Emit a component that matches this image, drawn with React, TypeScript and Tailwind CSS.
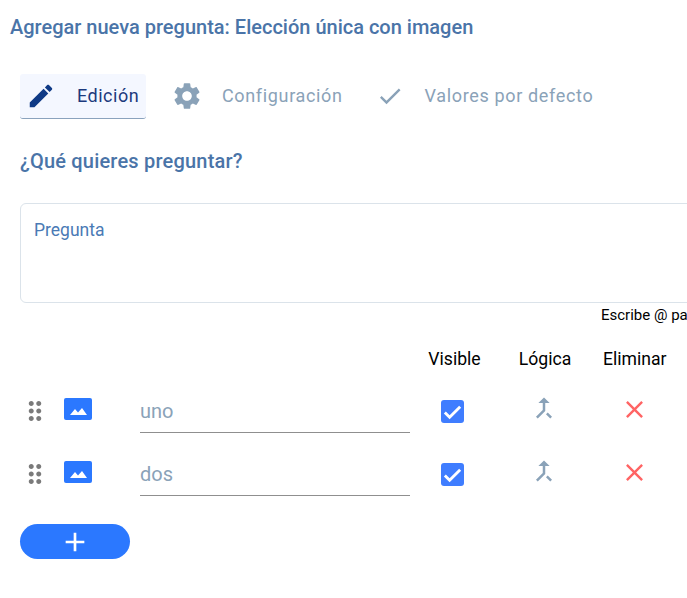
const ROW_GRID = "grid grid-cols-[30px_56px_34px_270px_84px_100px_80px]";

const Icon = ({ d, className }: { d: string; className: string }) => (
  <svg viewBox="0 0 24 24" fill="currentColor" className={className}>
    <path d={d} />
  </svg>
);

const ICONS = {
  edit: "M3 17.25V21h3.75L17.81 9.94l-3.75-3.75L3 17.25zM20.71 7.04c.39-.39.39-1.02 0-1.41l-2.34-2.34c-.39-.39-1.02-.39-1.41 0l-1.83 1.83 3.75 3.75 1.83-1.83z",
  settings:
    "M19.14 12.94c.04-.3.06-.61.06-.94 0-.32-.02-.64-.07-.94l2.03-1.58c.18-.14.23-.41.12-.61l-1.92-3.32c-.12-.22-.37-.29-.59-.22l-2.39.96c-.5-.38-1.03-.7-1.62-.94l-.36-2.54c-.04-.24-.24-.41-.48-.41h-3.84c-.24 0-.43.17-.47.41l-.36 2.54c-.59.24-1.13.57-1.62.94l-2.39-.96c-.22-.08-.47 0-.59.22L2.74 8.87c-.12.21-.08.47.12.61l2.03 1.58c-.05.3-.09.63-.09.94s.02.64.07.94l-2.03 1.58c-.18.14-.23.41-.12.61l1.92 3.32c.12.22.37.29.59.22l2.39-.96c.5.38 1.03.7 1.62.94l.36 2.54c.05.24.24.41.48.41h3.84c.24 0 .44-.17.47-.41l.36-2.54c.59-.24 1.13-.56 1.62-.94l2.39.96c.22.08.47 0 .59-.22l1.92-3.32c.12-.22.07-.47-.12-.61l-2.01-1.58zM12 15.6c-1.98 0-3.6-1.62-3.6-3.6s1.62-3.6 3.6-3.6 3.6 1.62 3.6 3.6-1.62 3.6-3.6 3.6z",
  check: "M9 16.17L4.83 12l-1.42 1.41L9 19 21 7l-1.41-1.41z",
  drag: "M11 18c0 1.1-.9 2-2 2s-2-.9-2-2 .9-2 2-2 2 .9 2 2zm-2-8c-1.1 0-2 .9-2 2s.9 2 2 2 2-.9 2-2-.9-2-2-2zm0-6c-1.1 0-2 .9-2 2s.9 2 2 2 2-.9 2-2-.9-2-2-2zm6 4c1.1 0 2-.9 2-2s-.9-2-2-2-2 .9-2 2 .9 2 2 2zm0 2c-1.1 0-2 .9-2 2s.9 2 2 2 2-.9 2-2-.9-2-2-2zm0 6c-1.1 0-2 .9-2 2s.9 2 2 2 2-.9 2-2-.9-2-2-2z",
  merge: "M17 20.41L18.41 19 15 15.59 13.59 17 17 20.41zM7.5 8H11v5.59L5.59 19 7 20.41l6-6V8h3.5L12 3.5 7.5 8z",
  close: "M19 6.41L17.59 5 12 10.59 6.41 5 5 6.41 10.59 12 5 17.59 6.41 19 12 13.41 17.59 19 19 17.59 13.41 12z",
  plus: "M19 13h-6v6h-2v-6H5v-2h6V5h2v6h6v2z",
};

const OptionRow = ({ label }: { label: string }) => (
  <div className={`${ROW_GRID} h-[40px] items-start`}>
    <div className="flex justify-center pt-[3px]">
      <Icon d={ICONS.drag} className="size-[30px] text-[#7a7a7a]" />
    </div>
    <div className="flex justify-center pt-[5px]">
      <div className="flex h-[22px] w-[28px] items-end justify-center rounded-[2px] bg-[#2b78ff] pb-[5px]">
        <svg viewBox="0 0 17 7" fill="white" className="h-[7px] w-[17px]">
          <path d="M0 7L5 1l3 3.5L12 0l5 7z" />
        </svg>
      </div>
    </div>
    <div />
    <div className="flex h-[40px] items-center border-b border-[#8f8f8f] pb-[3px] text-[20px] text-[#8aa2b8]">
      {label}
    </div>
    <div className="flex justify-center pt-[7px]">
      <div className="flex size-[23px] items-center justify-center rounded-[3px] bg-[#3f7dff]">
        <svg viewBox="0 0 24 24" fill="none" stroke="white" strokeWidth="3" className="size-[23px]">
          <path d="M4 13l5 5L20 7" />
        </svg>
      </div>
    </div>
    <div className="flex justify-center">
      <Icon d={ICONS.merge} className="size-[30px] text-[#8aa2b8]" />
    </div>
    <div className="flex justify-center pt-[2px]">
      <Icon d={ICONS.close} className="size-[29px] text-[#ff6464]" />
    </div>
  </div>
);

export default function App() {
  return (
    <div className="h-[598px] w-[687px] overflow-hidden bg-white font-['Roboto',sans-serif]">
      <h1 className="pl-[10px] pt-[15px] text-[20px] leading-[24px] font-medium whitespace-nowrap text-[#4a74a8]">
        Agregar nueva pregunta: Elección única con imagen
      </h1>

      <div className="mt-[35px] flex items-center pl-[20px]">
        <div className="flex h-[45px] w-[126px] items-center rounded-[3px] border-b border-[#8aa2bd] bg-[#f4f7ff] pl-[6px]">
          <Icon d={ICONS.edit} className="size-[30px] text-[#0f3a86]" />
          <span className="ml-[21px] pb-[2px] text-[18px] tracking-[0.5px] text-[#1c3a7d]">Edición</span>
        </div>
        <Icon d={ICONS.settings} className="mb-[2px] ml-[25px] size-[32px] text-[#8aa2b8]" />
        <span className="ml-[19px] pb-[2px] text-[18px] tracking-[0.65px] text-[#8aa2b8]">Configuración</span>
        <Icon d={ICONS.check} className="mb-[2px] ml-[33px] size-[28px] text-[#8aa2b8]" />
        <span className="ml-[21px] pb-[2px] text-[18px] tracking-[0.65px] text-[#8aa2b8]">Valores por defecto</span>
      </div>

      <h2 className="pl-[20px] pt-[30px] text-[20px] leading-[24px] font-medium tracking-[0.2px] text-[#4a74a8]">
        ¿Qué quieres preguntar?
      </h2>

      <div className="ml-[20px] mt-[30px] h-[100px] w-[720px] rounded-[6px] border border-[#dbe3ea] px-[13px] py-[15px] text-[17.5px] leading-[22px] text-[#4a7ab5]">
        Pregunta
      </div>
      <div className="whitespace-nowrap pl-[601px] pt-[2px] text-[15px] leading-[20px] text-black">
        Escribe @ pa
      </div>

      <div className="pl-[20px] pt-[22px]">
        <div className={`${ROW_GRID} mb-[22px] text-[17.6px] leading-[24px] text-black`}>
          <span className="col-start-5 pl-[5px] text-center">Visible</span>
          <span className="pl-[2px] text-center">Lógica</span>
          <span className="whitespace-nowrap pl-[9px] text-left">Eliminar</span>
        </div>
        <div className="flex flex-col gap-[23px]">
          <OptionRow label="uno" />
          <OptionRow label="dos" />
        </div>
        <button className="mt-[28px] flex h-[35px] w-[110px] items-center justify-center rounded-full bg-[#2b78ff]">
          <Icon d={ICONS.plus} className="size-[32px] text-white" />
        </button>
      </div>
    </div>
  );
}
